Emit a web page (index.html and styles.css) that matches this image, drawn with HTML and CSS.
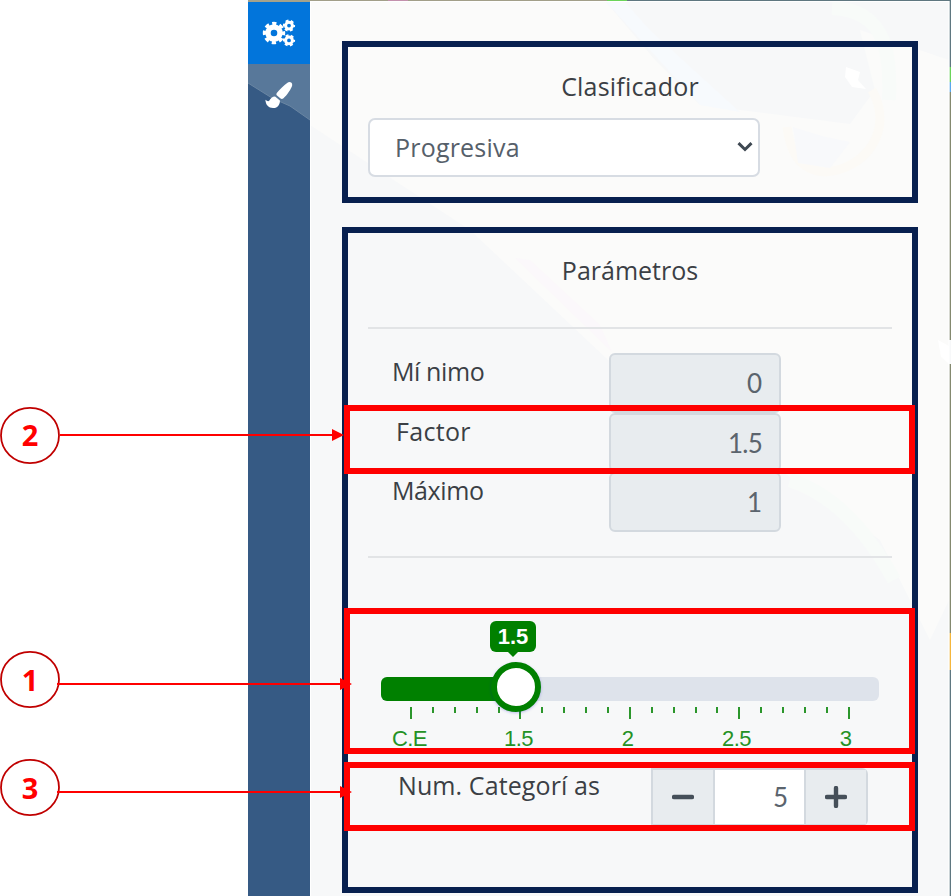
FILE: index.html
```html
<!DOCTYPE html>
<html lang="es">
<head>
<meta charset="utf-8">
<title>Clasificador</title>
<link rel="stylesheet" href="styles.css">
</head>
<body>
<div class="app">
  <nav class="sidebar">
    <svg class="coast" width="62" height="128" viewBox="0 0 62 128" aria-hidden="true">
      <path fill="#a5a28b" d="M0 0H62V2H0Z"/>
      <path fill="#58789a" d="M0 64H62V120L42 106L24 98L0 83Z"/>
      <path fill="none" stroke="#6a86a3" stroke-width="1" d="M0 83L24 98L42 106L62 120"/>
    </svg>
    <button class="tab tab-active" aria-label="Ajustes">
      <svg width="34" height="28" viewBox="0 0 34 28">
        <g fill="none" stroke="#fff">
          <circle cx="12" cy="14" r="6" stroke-width="5.4"/>
          <circle cx="12" cy="14" r="9.5" stroke-width="3.4" stroke-dasharray="4.2 3.261" stroke-dashoffset="2.1"/>
          <circle cx="27" cy="6.6" r="3.4" stroke-width="3"/>
          <circle cx="27" cy="6.6" r="5.1" stroke-width="2" stroke-dasharray="2.9 2.44" stroke-dashoffset="1.4"/>
          <circle cx="27" cy="21.4" r="3.4" stroke-width="3"/>
          <circle cx="27" cy="21.4" r="5.1" stroke-width="2" stroke-dasharray="2.9 2.44" stroke-dashoffset="1.4"/>
        </g>
      </svg>
    </button>
    <button class="tab" aria-label="Estilo">
      <svg width="28" height="28" viewBox="0 0 28 28" fill="#fff">
        <path d="M22.5 1.8C24.5 0.2 27.6 1.6 27.2 4.3C26.6 7.6 21.5 14.8 18.5 17.3C17.6 18 16.5 18.2 15.6 17.6L12 14.6C11.2 13.8 11.2 12.8 11.8 12C14.2 8.8 18.8 4.6 22.5 1.8Z"/>
        <path d="M10.1 15.4L14.9 19.4C15.2 23.4 12.7 26.8 8.4 27C3.9 27.2 0.6 24.2 0.4 18.8C2.1 20.2 3.4 20.7 4.4 19.5C5.6 17.4 7.4 15.3 10.1 15.4Z"/>
      </svg>
    </button>
  </nav>
  <main class="panel">
    <svg class="terrain" width="641" height="896" viewBox="310 0 641 896" aria-hidden="true">
      <path fill="#fbfbfa" d="M310 2H606L655 60L700 105L850 124L875 90L860 30L949 60V600L930 640L880 540L780 470L640 390L470 230L310 125Z"/>
      <path fill="#f7fafd" d="M606 2L700 105L740 112L650 30L625 2Z"/>
      <path fill="#fbf8fb" d="M515 258L612 352L600 325L530 260Z"/>
      <path fill="none" stroke="#fcfaf6" stroke-width="9" d="M872 90C895 130 865 170 825 172C798 170 790 150 787 127"/>
      <path fill="#f8f9fb" d="M793 127L822 136L850 142L830 168L798 163Z"/>
      <path fill="none" stroke="#f8fbf9" stroke-width="14" d="M790 480Q850 500 894 580M832 8C890 10 890 60 889 100"/>
      <path fill="#fff" d="M846 67l14 5l-2 8l8 9l-14-2l-7-10zM938 340l11 6v18l-8-7z"/>
      <path fill="#fff" d="M310 1H311V896H310ZM310 1H949V2H310ZM948.5 2H949.5V896H948.5Z"/>
      <path fill="#a29f89" d="M310 0H607V1H310Z"/>
      <path fill="#c391ad" d="M388 0H408V1H388Z"/>
      <path fill="#6bd45a" d="M607 0H627V1H607ZM949.7 67H951V82H949.7Z"/>
      <path fill="#5f7780" d="M627 0H951V67H949.7V1H627ZM949.7 670H951V896H949.7Z"/>
      <path fill="#5ca8ec" d="M949.7 82H951V92H949.7Z"/>
      <path fill="#84896f" d="M949.7 92H951V340H949.7ZM949.7 364H951V633H949.7Z"/>
      <path fill="#f5b63c" d="M949.7 633H951V670H949.7Z"/>
    </svg>
    <div class="content">
      <section class="box box-classifier">
        <h2 class="title"><span class="t-clas">Clasificador</span></h2>
        <div class="select"><span class="t-prog">Progresiva</span>
          <svg width="16" height="10" viewBox="0 0 16 10"><path d="M1.5 1.2L8 7.5L14.5 1.2" fill="none" stroke="#3e4852" stroke-width="3"/></svg>
        </div>
      </section>
      <section class="box box-params">
        <h2 class="title"><span class="t-par">Parámetros</span></h2>
        <div class="fields">
          <div class="row"><span class="label t-min">Mí nimo</span><span class="field">0</span></div>
          <div class="row"><span class="label t-fac">Factor</span><span class="field f-dec">1.5</span></div>
          <div class="row"><span class="label t-max">Máximo</span><span class="field">1</span></div>
        </div>
        <div class="slider">
          <div class="track"><div class="fill"></div><div class="handle"></div><div class="tip">1.5</div></div>
          <div class="ticks">
            <i class="big"></i><i></i><i></i><i></i><i></i><i class="big"></i><i></i><i></i><i></i><i></i><i class="big"></i><i></i><i></i><i></i><i></i><i class="big"></i><i></i><i></i><i></i><i></i><i class="big"></i>
          </div>
          <div class="scale"><span>C.E</span><span>1.5</span><span>2</span><span>2.5</span><span>3</span></div>
        </div>
        <div class="count">
          <span class="label t-num">Num. Categorí as</span>
          <div class="stepper">
            <button class="step" aria-label="Menos"><svg width="22" height="22" viewBox="0 0 22 22"><path d="M2 11H20" stroke="#454f59" stroke-width="4.4" stroke-linecap="round"/></svg></button>
            <span class="value">5</span>
            <button class="step" aria-label="Más"><svg width="22" height="22" viewBox="0 0 22 22"><path d="M2 11H20M11 2V20" stroke="#454f59" stroke-width="4.4" stroke-linecap="round"/></svg></button>
          </div>
        </div>
      </section>
    </div>
  </main>
</div>
<svg class="callouts" width="951" height="896" viewBox="0 0 951 896">
  <g fill="none" stroke="#f00" stroke-width="6">
    <rect x="347" y="408" width="565" height="63"/>
    <rect x="347" y="611" width="565" height="140"/>
    <rect x="347" y="765" width="565" height="63"/>
  </g>
  <g fill="#fff" stroke="#c00000" stroke-width="1.8">
    <ellipse cx="30" cy="435.5" rx="29" ry="27.7"/>
    <ellipse cx="30" cy="679.5" rx="29" ry="27.7"/>
    <ellipse cx="30" cy="787.5" rx="29" ry="27.7"/>
  </g>
  <path stroke="#f00" stroke-width="2" d="M60 435H334M57 684H342M57 792H342"/>
  <path fill="#f00" d="M332 429L344 435L332 441ZM340 678L352 684L340 690ZM340 786L352 792L340 798Z"/>
  <g class="callout-text" text-anchor="middle">
    <text x="30" y="446">2</text>
    <text x="30" y="691">1</text>
    <text x="30" y="799">3</text>
  </g>
</svg>
</body>
</html>
```
FILE: styles.css
```css
* { box-sizing: border-box; }
body { margin: 0; width: 951px; height: 896px; overflow: hidden; position: relative; background: #fff; font-family: "Open Sans", sans-serif; font-size: 25px; color: #3b3f45; }
button { border: 0; padding: 0; margin: 0; }
.app { display: flex; height: 896px; padding-left: 248px; }
.sidebar { position: relative; width: 62px; flex: none; padding-top: 2px; background: #365a84; }
.coast { position: absolute; left: 0; top: 0; }
.tab { position: relative; display: flex; align-items: center; justify-content: center; width: 62px; height: 62px; background: none; }
.tab-active { background: #0275db; }
.panel { position: relative; width: 641px; flex: none; background: #f7f8f9; }
.terrain { position: absolute; left: 0; top: 0; }
.content { position: relative; display: flex; flex-direction: column; gap: 24px; padding: 41px 0 0 32px; }
.box { width: 576px; border: 6px solid #08204f; padding: 0 20px; }
.box-classifier { height: 162px; }
.box-params { height: 666px; }
.title { margin: 0; text-align: center; font-weight: 400; font-size: 25px; line-height: 40px; }
.title span { display: inline-block; }
.t-clas { letter-spacing: 0.2px; }
.t-prog { letter-spacing: 0.2px; line-height: 54px; height: 55px; }
.box-classifier .title { padding-top: 19px; }
.box-params .title { padding-top: 17px; height: 94px; }
.select { display: flex; align-items: center; justify-content: space-between; width: 392px; height: 59px; margin-top: 11.5px; padding: 0 5.5px 0 25px; background: #fff; border: 2px solid #d7dce3; border-radius: 7px; color: #56606a; }
.fields { border-top: 2px solid #e2e4e6; border-bottom: 2px solid #e2e4e6; height: 231px; padding-top: 24px; }
.row { display: flex; height: 59.5px; }
.label { line-height: 37px; padding-left: 24px; white-space: nowrap; }
.row .label { width: 241px; }
.t-min, .t-max { letter-spacing: -0.4px; }
.row .t-fac { padding-left: 28px; letter-spacing: 0.3px; line-height: 36px; }
.field { width: 172px; height: 59.5px; line-height: 56px; padding-right: 17px; text-align: right; background: #e8ecef; border: 2px solid #d3d9df; border-radius: 6px; color: #5b646d; font-family: Lato, sans-serif; font-size: 26px; }
.f-dec { letter-spacing: -0.8px; }
.slider { padding: 119px 13px 0; }
.track { position: relative; height: 23.5px; background: #dee3eb; border-radius: 6px; }
.fill { width: 134px; height: 100%; background: #008000; border-radius: 6px 0 0 6px; }
.handle { position: absolute; left: 110px; top: -15.5px; width: 50px; height: 50px; border: 6px solid #008000; border-radius: 50%; background: #fff; box-shadow: 0 1px 3px rgba(0,0,200,.25); z-index: 1; }
.tip { position: absolute; left: 109px; top: -56px; width: 46px; height: 31px; border-radius: 6px; background: #008000; color: #fff; text-align: center; font: bold 22px/31px "Liberation Sans", sans-serif; }
.tip::after { content: ""; position: absolute; left: 18px; top: 31px; border: 5px solid transparent; border-top-color: #008000; border-bottom: 0; }
.ticks { display: flex; justify-content: space-between; width: 440px; height: 16px; margin: 6px 0 0 29px; }
.ticks i { width: 2px; height: 6.5px; background: #2c962c; }
.ticks .big { height: 12.5px; }
.scale { display: flex; width: 545px; margin: 4px 0 0 -26px; color: #259225; font: 22px/24px "Liberation Sans", sans-serif; letter-spacing: -0.6px; }
.scale span { width: 109px; text-align: center; flex: none; }
.count { display: flex; margin-top: 17px; }
.count .label { width: 283px; padding-left: 30px; line-height: 35px; letter-spacing: 0.1px; }
.stepper { display: flex; height: 58px; width: 217px; border: 2px solid #d3d9df; border-radius: 0 6px 6px 0; }
.step { width: 60px; display: flex; align-items: center; justify-content: center; background: #e8ecef; }
.value { flex: 1; background: #fff; border: solid #d3d9df; border-width: 0 2px; text-align: right; padding-right: 16px; line-height: 55px; color: #5b646d; font-family: Lato, sans-serif; font-size: 26px; }
.callouts { position: absolute; left: 0; top: 0; }
.callout-text { font: bold 29px "Open Sans", sans-serif; fill: #f00; }
```
